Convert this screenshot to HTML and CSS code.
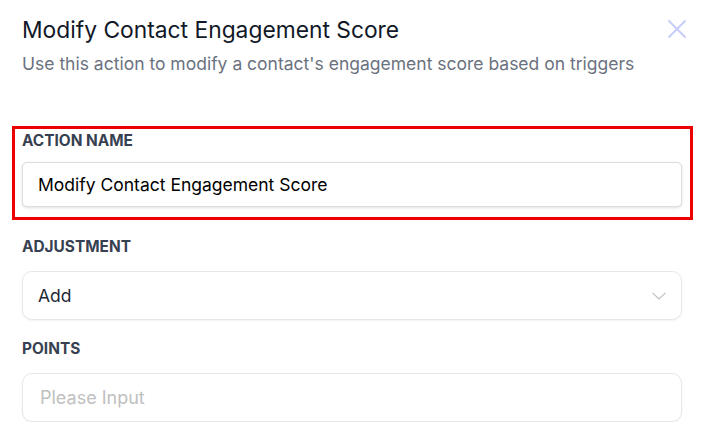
FILE: index.html
```html
<!DOCTYPE html>
<html lang="en">
<head>
  <meta charset="UTF-8">
  <meta name="viewport" content="width=device-width, initial-scale=1.0">
  <title>Modify Contact Engagement Score</title>
  <link rel="stylesheet" href="styles.css">
</head>
<body>
  <div class="drawer">
    <header class="drawer-head">
      <div>
        <h1 class="drawer-title">Modify Contact Engagement Score</h1>
        <p class="drawer-sub">Use this action to modify a contact's engagement score based on triggers</p>
      </div>
      <button class="close-btn" aria-label="Close">
        <svg width="18" height="18" viewBox="0 0 18 18" fill="none" stroke="#c5cbf8" stroke-width="1.8" stroke-linecap="round">
          <path d="M1 1 L17 17 M17 1 L1 17"/>
        </svg>
      </button>
    </header>

    <form class="action-form">
      <div class="field field-active">
        <label class="field-label" for="action-name">ACTION NAME</label>
        <input class="field-input input-name" id="action-name" type="text" value="Modify Contact Engagement Score">
      </div>

      <div class="field">
        <label class="field-label">ADJUSTMENT</label>
        <div class="field-input field-select">
          <span>Add</span>
          <svg width="14" height="8" viewBox="0 0 14 8" fill="none" stroke="#bdbdbd" stroke-width="1.1">
            <path d="M0.5 0.8 L7 7 L13.5 0.8"/>
          </svg>
        </div>
      </div>

      <div class="field">
        <label class="field-label" for="points">POINTS</label>
        <input class="field-input input-points" id="points" type="text" placeholder="Please Input">
      </div>
    </form>
  </div>
</body>
</html>
```

FILE: styles.css
```css
body {
  margin: 0;
  padding: 0;
  background-color: #fff;
  font-family: Inter, "Noto Sans", sans-serif;
}

.drawer {
  padding: 15px 30px 0 22px;
}

.drawer-head {
  display: flex;
  justify-content: space-between;
  align-items: flex-start;
}

.drawer-title {
  margin: 0;
  font-size: 22.8px;
  font-weight: 400;
  line-height: 30px;
  color: #111827;
}

.drawer-sub {
  margin: 7px 0 0 0;
  font-size: 17.5px;
  line-height: 24px;
  color: #6b7280;
}

.close-btn {
  background: none;
  border: none;
  padding: 0;
  margin-top: 5px;
  margin-right: -4px;
  cursor: pointer;
}

.action-form {
  margin-top: 50px;
  display: flex;
  flex-direction: column;
  gap: 19px;
}

.field {
  display: flex;
  flex-direction: column;
}

.field-active {
  border: 3px solid #ee0000;
  padding: 2px 8px 10px 7px;
  margin: 0 -11px -2px -10px;
}

.field-label {
  font-weight: 700;
  font-size: 15.4px;
  line-height: 20px;
  color: #374151;
  margin-bottom: 14px;
}

.field-active .field-label {
  margin-bottom: 11px;
}

.field-input {
  box-sizing: border-box;
  height: 49px;
  border: 1px solid #e5e7eb;
  border-radius: 10px;
  padding: 0 15px;
  font-family: Inter, "Noto Sans", sans-serif;
  font-size: 17.5px;
  color: #1f2937;
  background: #fff;
  box-shadow: 0 1px 2px rgba(0, 0, 0, 0.05);
  outline: none;
}

.input-name {
  height: 45px;
  border-radius: 5px;
  border-color: #dcdde3;
  color: #000;
  box-shadow: 0 1px 3px rgba(0, 0, 0, 0.12);
}

.input-points {
  padding-left: 17px;
  font-size: 18px;
}

.field-input::placeholder {
  color: #c0c0c0;
}

.field-select {
  display: flex;
  align-items: center;
  justify-content: space-between;
}
```
